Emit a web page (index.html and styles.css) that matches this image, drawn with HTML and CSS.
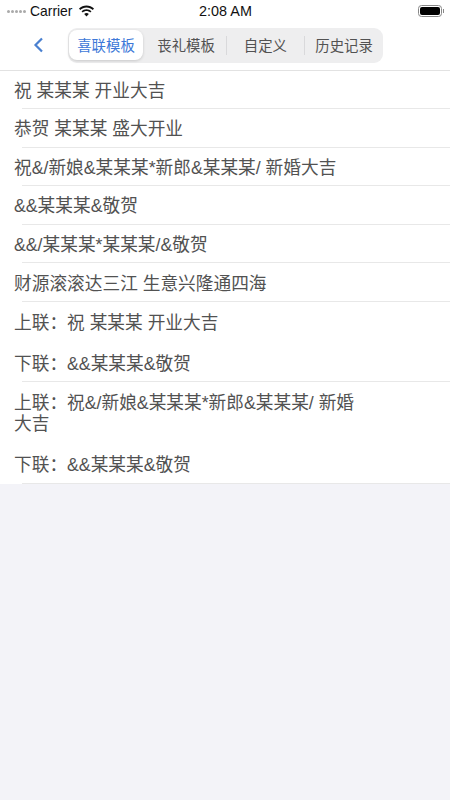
FILE: index.html
```html
<!DOCTYPE html>
<html lang="zh">
<head>
<meta charset="utf-8">
<title>模板</title>
<link rel="stylesheet" href="styles.css">
</head>
<body>
<div class="status">
  <div class="status-left">
    <span class="dots"><i></i><i></i><i></i><i></i><i></i></span>
    <span>Carrier</span>
    <svg class="wifi" width="17" height="12" viewBox="0 0 17 12"><path d="M8.500 2.400c2.400 0 4.600.9 6.300 2.500l1.200-1.300C14 1.700 11.300.6 8.500.6S3 1.700 1 3.600l1.200 1.300C3.900 3.300 6.100 2.400 8.500 2.400z"/><path d="M8.500 6c1.400 0 2.700.5 3.700 1.500l1.300-1.300C12.100 4.900 10.400 4.200 8.500 4.200S4.900 4.900 3.500 6.200l1.300 1.300C5.800 6.500 7.100 6 8.500 6z"/><path d="M8.500 11.400l2.300-2.400c-.6-.6-1.400-.9-2.300-.9s-1.700.3-2.300.9z"/></svg>
  </div>
  <div class="status-time">2:08 AM</div>
  <div class="status-right">
    <span class="battery"><span class="battery-fill"></span></span><span class="battery-tip"></span>
  </div>
</div>
<header class="nav">
  <svg class="back" width="12" height="16" viewBox="0 0 12 16"><path d="M9 1.500L2.500 8 9 14.500" fill="none" stroke="#4a80d0" stroke-width="2.200"/></svg>
  <div class="tabs">
    <div class="tab active">喜联模板</div>
    <div class="tab">丧礼模板</div>
    <div class="tab sep">自定义</div>
    <div class="tab sep">历史记录</div>
  </div>
</header>
<main class="list">
  <div class="row">祝 某某某 开业大吉</div>
  <div class="row">恭贺 某某某 盛大开业</div>
  <div class="row">祝&amp;/新娘&amp;某某某*新郎&amp;某某某/ 新婚大吉</div>
  <div class="row">&amp;&amp;某某某&amp;敬贺</div>
  <div class="row">&amp;&amp;/某某某*某某某/&amp;敬贺</div>
  <div class="row">财源滚滚达三江 生意兴隆通四海</div>
  <div class="pair">
    <div class="line">上联：祝 某某某 开业大吉</div>
    <div class="line">下联：&amp;&amp;某某某&amp;敬贺</div>
  </div>
  <div class="pair pair-wrapped">
    <div class="line">上联：祝&amp;/新娘&amp;某某某*新郎&amp;某某某/ 新婚大吉</div>
    <div class="line">下联：&amp;&amp;某某某&amp;敬贺</div>
  </div>
</main>
</body>
</html>
```
FILE: styles.css
```css
* { box-sizing: border-box; }
html, body { margin: 0; height: 100%; }
body {
  width: 450px;
  height: 800px;
  overflow: hidden;
  background: #f3f3f8;
  font-family: "Liberation Sans", "Noto Sans CJK SC", sans-serif;
  color: #525252;
}
.status {
  height: 22px;
  background: #fff;
  display: grid;
  grid-template-columns: 1fr auto 1fr;
  align-items: center;
  font-size: 14.400px;
  color: #111;
  padding: 0 6px 0 7px;
}
.status-left { display: flex; align-items: center; gap: 4px; font-size: 13.900px; }
.dots { display: flex; gap: 1px; }
.dots i { width: 3px; height: 3px; border-radius: 50%; background: #aaa; }
.wifi { fill: #111; margin-left: 2px; }
.status-right { display: flex; justify-content: flex-end; align-items: center; }
.battery { width: 24px; height: 12px; border: 1px solid #888; border-radius: 3.500px; padding: 1px; display: block; }
.battery-fill { display: block; height: 100%; background: #000; border-radius: 2px; }
.battery-tip { width: 1px; height: 4px; background: #888; margin-left: 1px; }
.nav {
  height: 48.500px;
  background: #fff;
  border-bottom: 1px solid #e2e2e2;
  display: flex;
  align-items: center;
  padding: 0 0 1px 33px;
}
.back { margin-right: 23px; }
.tabs {
  width: 315px;
  height: 35px;
  background: #eeeeef;
  border-radius: 9px;
  display: flex;
  align-items: center;
  font-size: 14.400px;
}
.tab {
  flex: 0 0 78.750px;
  height: 19px;
  line-height: 21px;
  text-align: center;
  color: #525252;
}
.tab.sep { border-left: 1px solid #d9d9db; }
.tab.active {
  height: 30px;
  line-height: 32px;
  flex: 0 0 74px;
  margin: 0 3.750px 0 1px;
  background: #fff;
  color: #3d78d8;
  border-radius: 8px;
  box-shadow: 0 1px 3px rgba(0,0,0,.16);
}
.list { background: #fff; }
.row {
  height: 38.600px;
  display: flex;
  align-items: center;
  padding: 0 0 2.500px 14px;
  font-size: 17.700px;
  position: relative;
}
.row::after, .pair::after {
  content: "";
  position: absolute;
  left: 22px;
  right: 0;
  bottom: 0;
  height: 1px;
  background: #e8e8e8;
}
.pair {
  position: relative;
  padding: 10.500px 88px 7px 14px;
  font-size: 17.700px;
  line-height: 21px;
  display: flex;
  flex-direction: column;
  gap: 20px;
}
.pair-wrapped { padding-top: 11px; padding-bottom: 8.200px; }
```
